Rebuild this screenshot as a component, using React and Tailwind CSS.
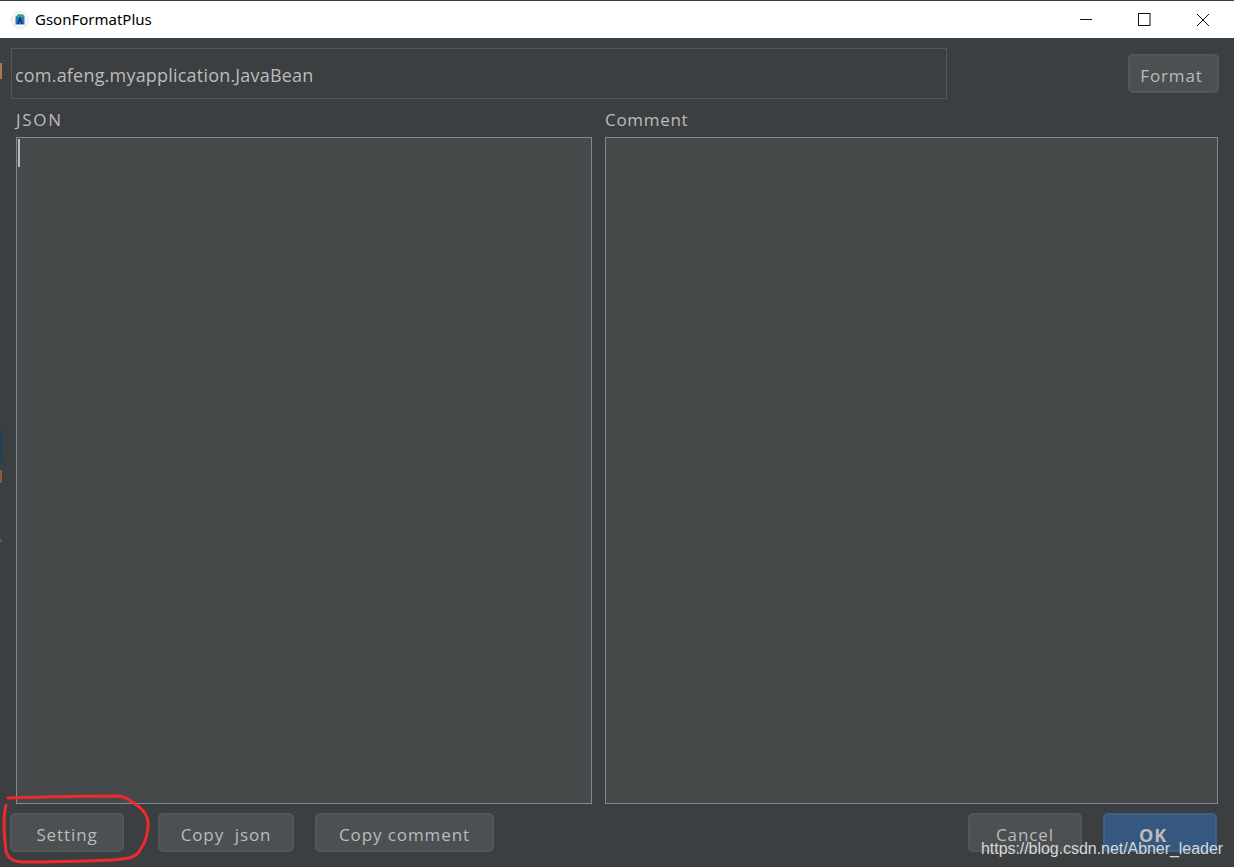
const font = "font-['Open_Sans','Noto_Sans',sans-serif]";

const DarkButton = ({ label, className }) => (
  <button
    className={`h-[39px] rounded-[5px] border-2 border-[#54575a] bg-[#4c5052] pt-[5px] text-[17px] tracking-[0.9px] text-[#bbbbbb] whitespace-pre ${className}`}
  >
    {label}
  </button>
);

const TextBox = ({ className, children }) => (
  <div className={`relative border border-[#7c8a94] bg-[#45494a] ${className}`}>{children}</div>
);

const App = () => {
  return (
    <div className={`relative flex h-[867px] w-[1234px] flex-col overflow-hidden border-t border-[#3c3f41] bg-[#3c3f41] ${font}`}>
      {/* title bar */}
      <div className="flex h-[37px] shrink-0 items-center bg-white">
        <svg width="18" height="18" viewBox="0 0 18 18" className="ml-[11px]">
          <circle cx="9" cy="9" r="8.5" fill="#f6f8f8" stroke="#e6e8e8" />
          <path d="M4.5 6 L7 3.5 L12 3.5 L13.5 6 L13.5 13.5 L4.5 13.5 Z" fill="#2a78c8" />
          <path d="M4.5 6 L7 3.5 L12 3.5 L13.5 6 Z" fill="#3da878" />
          <path d="M6.8 13 L9 7.5 L11.2 13" fill="none" stroke="#10305e" strokeWidth="1.4" />
        </svg>
        <span className="ml-[6px] font-['Noto_Sans',sans-serif] text-[15px] text-black">GsonFormatPlus</span>
        <div className="ml-auto flex items-center">
          <svg width="14" height="14" viewBox="0 0 14 14" className="mr-[44px]">
            <path d="M1 6.5H13" stroke="#111" strokeWidth="1" />
          </svg>
          <svg width="14" height="14" viewBox="0 0 14 14" className="mr-[45px]">
            <rect x="1.5" y="0.5" width="11.5" height="12" fill="none" stroke="#111" strokeWidth="1" />
          </svg>
          <svg width="14" height="14" viewBox="0 0 14 14" className="mr-[24px]">
            <path d="M1 1L13 13M13 1L1 13" stroke="#111" strokeWidth="1" />
          </svg>
        </div>
      </div>

      {/* content */}
      <div className="flex min-h-0 flex-1 flex-col">
        <div className="mt-[10px] flex items-start pl-[11px] pr-[15px]">
          <div className="flex h-[51px] w-[936px] items-center border border-[#555759] bg-[#3c3f41] pl-[3px] pt-[4px] text-[18px] tracking-[0.2px] text-[#bbbbbb]">
            com.afeng.myapplication.JavaBean
          </div>
          <DarkButton label="Format" className="ml-auto mt-[6px] w-[91px] pr-[4px]" />
        </div>

        <div className="mt-[7px] flex h-[26px] items-center pl-[16px] pt-[1px] text-[17px] tracking-[0.7px] text-[#bbbbbb]">
          <span className="w-[589px] tracking-[1.7px]">JSON</span>
          <span>Comment</span>
        </div>

        <div className="mt-[5px] flex h-[667px] pl-[16px] pr-[16px]">
          <TextBox className="w-[576px]">
            <div className="ml-[1px] mt-[1px] h-[28px] w-[2px] bg-[#bbbbbb]" />
          </TextBox>
          <TextBox className="ml-[13px] flex-1" />
        </div>

        <div className="mt-[9px] flex items-start pl-[10px] pr-[17px]">
          <DarkButton label="Setting" className="w-[114px]" />
          <DarkButton label="Copy  json" className="ml-[34px] w-[136px]" />
          <DarkButton label="Copy comment" className="ml-[21px] w-[179px]" />
          <DarkButton label="Cancel" className="ml-auto w-[114px]" />
          <button className="ml-[21px] h-[39px] w-[114px] rounded-[5px] border-2 border-[#3d6185] bg-[#365880] pr-[14px] pt-[5px] text-[18px] font-bold tracking-[0.9px] text-[#bbbbbb]">
            OK
          </button>
        </div>
      </div>

      {/* annotation drawn on the screenshot */}
      <svg width="160" height="80" viewBox="0 0 160 80" className="absolute left-0 top-[790px]">
        <path
          d="M6 14C3 26 4 44 6 60C8 68 14 71 24 71C50 71 85 70 112 69C124 68 134 67 138 62C142 56 147 50 148 36C149 28 145 20 138 15C132 11 128 7 120 5C90 5 40 6 8 7"
          fill="none"
          stroke="#f02a2a"
          strokeWidth="3"
          strokeLinecap="round"
        />
      </svg>

      {/* watermark */}
      <span className="absolute left-[981px] top-[838px] font-['Liberation_Sans',sans-serif] text-[16px] leading-[20px] tracking-[-0.05px] text-[#d8d8d8]">
        https://blog.csdn.net/Abner_leader
      </span>

      {/* bits of the window behind */}
      <div className="absolute left-0 top-[62px] h-[16px] w-[2px] bg-[#a87a4c]" />
      <div className="absolute left-0 top-[428px] h-[31px] w-[2px] bg-[#1c4258]" />
      <div className="absolute left-0 top-[469px] h-[13px] w-[2px] bg-[#8a5a3c]" />
      <div className="absolute left-0 top-[538px] h-[3px] w-[2px] bg-[#8a4a3c]" />
    </div>
  );
};

export default App;
